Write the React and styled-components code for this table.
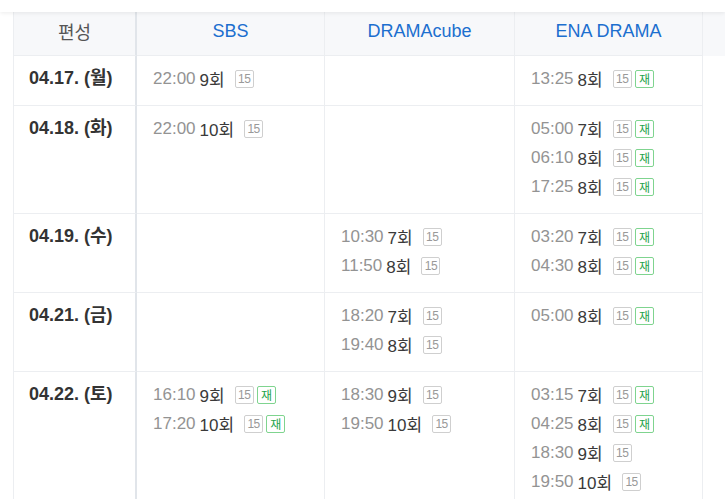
import React from 'react';
import styled, { createGlobalStyle } from 'styled-components';

const GlobalStyle = createGlobalStyle`
  body {
    margin: 0;
    background: #fff;
    overflow: hidden;
    font-family: "Liberation Sans", "Noto Sans CJK KR", sans-serif;
  }
`;

const channels = ['SBS', 'DRAMAcube', 'ENA DRAMA'];

const schedule = [
  {
    date: '04.17. (월)',
    slots: [
      [{ time: '22:00', ep: '9회' }],
      [],
      [{ time: '13:25', ep: '8회', re: true }],
    ],
  },
  {
    date: '04.18. (화)',
    slots: [
      [{ time: '22:00', ep: '10회' }],
      [],
      [
        { time: '05:00', ep: '7회', re: true },
        { time: '06:10', ep: '8회', re: true },
        { time: '17:25', ep: '8회', re: true },
      ],
    ],
  },
  {
    date: '04.19. (수)',
    slots: [
      [],
      [
        { time: '10:30', ep: '7회' },
        { time: '11:50', ep: '8회' },
      ],
      [
        { time: '03:20', ep: '7회', re: true },
        { time: '04:30', ep: '8회', re: true },
      ],
    ],
  },
  {
    date: '04.21. (금)',
    slots: [
      [],
      [
        { time: '18:20', ep: '7회' },
        { time: '19:40', ep: '8회' },
      ],
      [{ time: '05:00', ep: '8회', re: true }],
    ],
  },
  {
    date: '04.22. (토)',
    slots: [
      [
        { time: '16:10', ep: '9회', re: true },
        { time: '17:20', ep: '10회', re: true },
      ],
      [
        { time: '18:30', ep: '9회' },
        { time: '19:50', ep: '10회' },
      ],
      [
        { time: '03:15', ep: '7회', re: true },
        { time: '04:25', ep: '8회', re: true },
        { time: '18:30', ep: '9회' },
        { time: '19:50', ep: '10회' },
      ],
    ],
  },
];

const App = () => {
  return (
    <>
      <GlobalStyle />
      <TopBar />
      <Board>
        <Row>
          <HeadCell $first>편성</HeadCell>
          {channels.map((c) => (
            <HeadCell key={c} $channel>{c}</HeadCell>
          ))}
          <SpareHead />
        </Row>
        {schedule.map((day) => (
          <Row key={day.date}>
            <DateCell>{day.date}</DateCell>
            {day.slots.map((list, i) => (
              <Cell key={i}>
                {list.map((s, j) => (
                  <Entry key={j}>
                    <Time>{s.time}</Time>
                    <Episode>{s.ep}</Episode>
                    <Badge>15</Badge>
                    {s.re && <Badge $rerun>재</Badge>}
                  </Entry>
                ))}
              </Cell>
            ))}
            <SpareCell />
          </Row>
        ))}
      </Board>
    </>
  );
};

const TopBar = styled.div`
  height: 12px;
  background: #fff;
  box-shadow: 0 1px 4px rgba(0, 0, 0, 0.08);
  position: relative;
  z-index: 2;
`;

const Board = styled.div`
  padding-left: 13px;
`;

const Row = styled.div`
  display: grid;
  grid-template-columns: 124px 188px 190px 188px 1fr;
`;

const HeadCell = styled.div`
  box-sizing: border-box;
  height: 44px;
  display: flex;
  align-items: center;
  justify-content: center;
  padding-bottom: 5px;
  background: #f7f8fa;
  font-size: 18px;
  color: ${(p) => (p.$channel ? '#1c6fcf' : '#555')};
  border-bottom: 1px solid #eceef1;
  border-left: ${(p) => (p.$first ? '1px solid #eceef1' : 'none')};
  border-right: ${(p) => (p.$first ? '2px solid #e1e5ea' : '1px solid #eceef1')};
`;

const SpareHead = styled.div`
  background: #f7f8fa;
`;

const DateCell = styled.div`
  box-sizing: border-box;
  padding: 8px 0 12px 15px;
  line-height: 29px;
  font-size: 18px;
  font-weight: 700;
  color: #333;
  border-left: 1px solid #eceef1;
  border-right: 2px solid #e1e5ea;
  border-bottom: 1px solid #eceef1;
`;

const Cell = styled.div`
  box-sizing: border-box;
  padding: 8px 0 12px 16px;
  border-right: 1px solid #eceef1;
  border-bottom: 1px solid #eceef1;
`;

const SpareCell = styled.div``;

const Entry = styled.div`
  display: flex;
  align-items: center;
  height: 29px;
  font-size: 17px;
  white-space: nowrap;
`;

const Time = styled.span`
  color: #939393;
  margin-right: 4px;
`;

const Episode = styled.span`
  color: #3a3a3a;
  margin-right: 10px;
`;

const Badge = styled.span`
  box-sizing: border-box;
  display: inline-flex;
  align-items: center;
  justify-content: center;
  width: 19px;
  height: 18px;
  margin-right: 3px;
  border-radius: 2px;
  font-size: 12px;
  letter-spacing: -0.5px;
  border: 1px solid ${(p) => (p.$rerun ? '#7fd48f' : '#cfcfcf')};
  color: ${(p) => (p.$rerun ? '#1fa34a' : '#999')};
`;

export default App;
